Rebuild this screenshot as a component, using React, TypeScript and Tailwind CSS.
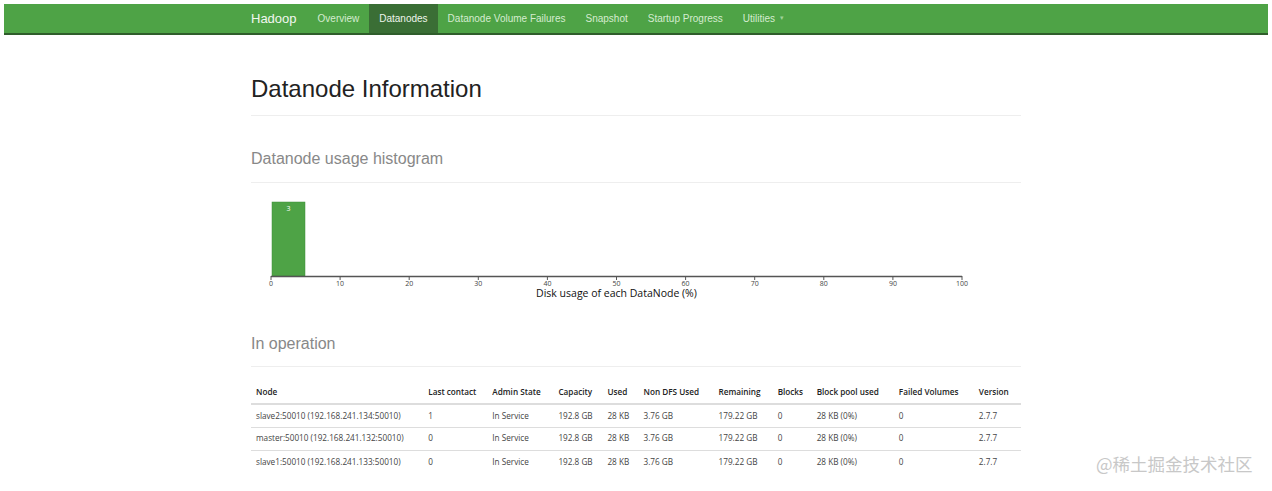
import React from 'react'

const navItems = [
  { label: 'Overview' },
  { label: 'Datanodes', active: true },
  { label: 'Datanode Volume Failures' },
  { label: 'Snapshot' },
  { label: 'Startup Progress' },
  { label: 'Utilities', caret: true },
]

const cols = [
  { name: 'Node', w: 'w-[172px]' },
  { name: 'Last contact', w: 'w-[64px]' },
  { name: 'Admin State', w: 'w-[66px]' },
  { name: 'Capacity', w: 'w-[49px]' },
  { name: 'Used', w: 'w-[36px]' },
  { name: 'Non DFS Used', w: 'w-[75px]' },
  { name: 'Remaining', w: 'w-[59px]' },
  { name: 'Blocks', w: 'w-[39px]' },
  { name: 'Block pool used', w: 'w-[82px]' },
  { name: 'Failed Volumes', w: 'w-[80px]' },
  { name: 'Version', w: 'w-[47px]' },
]

const rows = [
  ['slave2:50010 (192.168.241.134:50010)', '1'],
  ['master:50010 (192.168.241.132:50010)', '0'],
  ['slave1:50010 (192.168.241.133:50010)', '0'],
].map(([node, contact]) => [
  node,
  contact,
  'In Service',
  '192.8 GB',
  '28 KB',
  '3.76 GB',
  '179.22 GB',
  '0',
  '28 KB (0%)',
  '0',
  '2.7.7',
])

const Histogram = () => {
  const x0 = 20
  const step = 69.1
  return (
    <svg width="770" height="106" className="block" style={{ fontFamily: '"Open Sans", sans-serif' }}>
      <rect x="21" y="7" width="33" height="74" fill="#4ea346" stroke="#3f8f3a" strokeWidth="0.5" />
      <text x="37.5" y="16" fontSize="7" fill="#ffffff" textAnchor="middle">3</text>
      <line x1={x0} y1="81.5" x2={x0 + step * 10} y2="81.5" stroke="#555" strokeWidth="1.5" />
      {Array.from({ length: 11 }, (_, i) => {
        const x = x0 + step * i
        return (
          <g key={i}>
            <line x1={x} y1="81" x2={x} y2="85" stroke="#555" strokeWidth="1" />
            <text x={x} y="91" fontSize="7" fill="#444" textAnchor="middle">{i * 10}</text>
          </g>
        )
      })}
      <text x={x0 + step * 5} y="101.5" fontSize="10.5" fill="#111" textAnchor="middle">Disk usage of each DataNode (%)</text>
    </svg>
  )
}

export default function App() {
  return (
    <div className="min-h-[491px] bg-white pt-1 px-1" style={{ fontFamily: '"Liberation Sans", Arial, sans-serif' }}>
      <nav className="h-[31px] bg-[#4ea346] border-b-2 border-[#2f5d2b]">
        <div className="w-[770px] mx-auto flex items-stretch h-full">
          <div className="text-[13px] text-[#f2f7f0] pr-[11px] flex items-center">Hadoop</div>
          {navItems.map((item) => (
            <div
              key={item.label}
              className={
                item.active
                  ? 'bg-[#3a6e35] text-[#eef5ec] px-[10px] flex items-center text-[10px]'
                  : 'text-[#d5ecd0] px-[10px] flex items-center text-[10px]'
              }
            >
              {item.label}
              {item.caret && <span className="ml-[5px] text-[7px] text-[#9fd199]">▾</span>}
            </div>
          ))}
        </div>
      </nav>

      <div className="w-[770px] mx-auto">
        <h1 className="mt-[40px] text-[24px] leading-[28px] text-[#222]">Datanode Information</h1>
        <div className="mt-[12px] border-t border-[#eeeeee]" />

        <h2 className="mt-[33px] text-[16px] leading-[20px] text-[#888]">Datanode usage histogram</h2>
        <div className="mt-[13px] border-t border-[#eeeeee]" />

        <div className="mt-[12px]">
          <Histogram />
        </div>

        <h2 className="mt-[33px] text-[16px] leading-[20px] text-[#888]">In operation</h2>
        <div className="mt-[12px] border-t border-[#eeeeee]" />

        <table
          className="mt-[14px] table-fixed border-collapse w-[770px] text-[8.2px] text-[#444]"
          style={{ fontFamily: '"Open Sans", "Noto Sans", sans-serif' }}
        >
          <thead>
            <tr className="border-b-2 border-[#dddddd]">
              {cols.map((c) => (
                <th key={c.name} className={`${c.w} text-left font-semibold text-[#222] px-[5px] h-[23px]`}>
                  {c.name}
                </th>
              ))}
            </tr>
          </thead>
          <tbody>
            {rows.map((r, i) => (
              <tr key={i} className={i < rows.length - 1 ? 'border-b border-[#dddddd]' : ''}>
                {r.map((cell, j) => (
                  <td key={j} className="px-[5px] h-[23px] whitespace-nowrap">{cell}</td>
                ))}
              </tr>
            ))}
          </tbody>
        </table>
      </div>

      <div
        className="absolute left-[1096px] top-[451px] text-[17.5px] text-[#c8c8c8]"
        style={{ fontFamily: '"Noto Sans CJK SC", sans-serif' }}
      >
        @稀土掘金技术社区
      </div>
    </div>
  )
}
